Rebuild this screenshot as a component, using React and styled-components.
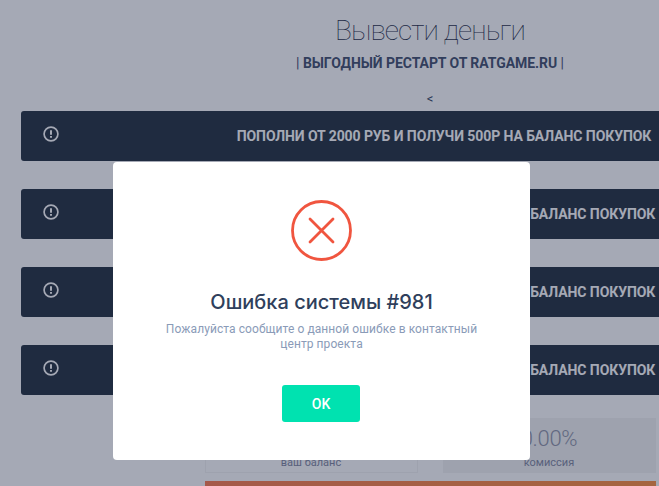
import React from 'react';
import styled, { createGlobalStyle } from 'styled-components';

const GlobalStyle = createGlobalStyle`
  html, body {
    margin: 0;
    height: 486px;
    overflow: hidden;
    background: #fff;
    font-family: Roboto, "Liberation Sans", sans-serif;
  }
`;

const Page = styled.div`
  width: 860px;
  height: 486px;
  display: flex;
  flex-direction: column;
  align-items: center;
  overflow: hidden;
`;

const Title = styled.h1`
  margin: 11px 0 0;
  font-size: 28px;
  line-height: 40px;
  font-weight: 100;
  letter-spacing: -0.9px;
  color: #1c2a45;
`;

const Subtitle = styled.div`
  margin-top: 3px;
  font-size: 14px;
  line-height: 18px;
  letter-spacing: -0.06px;
  color: #3f4d6c;
  b { font-weight: 700; }
`;

const BackMark = styled.div`
  margin-top: 20px;
  font-size: 13px;
  line-height: 14px;
  color: #2f3f5c;
`;

const BannerList = styled.div`
  margin-top: 5px;
  width: 818px;
  display: flex;
  flex-direction: column;
  gap: 28px;
`;

const Banner = styled.div`
  height: 50px;
  box-sizing: border-box;
  padding: 0 10px 0 22px;
  display: flex;
  align-items: flex-start;
  background: #202d3c;
  border-radius: 3px;
  color: #fff;
`;

const BannerIcon = styled.svg`
  width: 16px;
  height: 16px;
  margin-top: 15px;
  flex: none;
`;

const BannerText = styled.div`
  flex: 1;
  padding-top: 16px;
  text-align: center;
  font-size: 14px;
  line-height: 18px;
  font-weight: 700;
  letter-spacing: -0.08px;
`;

const Stats = styled.div`
  margin-top: 23px;
  width: 451px;
  display: grid;
  grid-template-columns: 1fr 1fr;
  gap: 25px;
`;

const StatCard = styled.div`
  height: 55px;
  box-sizing: border-box;
  padding-top: 6px;
  text-align: center;
  border: 1px solid ${p => (p.$filled ? 'transparent' : '#f3f3f3')};
  background: ${p => (p.$filled ? '#f3f3f3' : 'transparent')};
`;

const StatValue = styled.div`
  font-size: 22px;
  line-height: 28px;
  font-weight: 300;
  letter-spacing: -0.3px;
  color: #8f93a8;
`;

const StatLabel = styled.div`
  margin-top: 3px;
  font-size: 11px;
  line-height: 14px;
  color: #7f869f;
`;

const WithdrawBar = styled.div`
  margin-top: 8px;
  width: 451px;
  height: 40px;
  flex: none;
  background: linear-gradient(90deg, #ff7b4d, #ff8e3c);
`;

const Overlay = styled.div`
  position: fixed;
  top: 0;
  left: 0;
  right: 16px;
  bottom: 0;
  display: flex;
  justify-content: center;
  align-items: flex-start;
`;

const Dim = styled.div`
  position: fixed;
  inset: 0;
  background: rgba(30, 40, 70, 0.4);
`;

const Modal = styled.div`
  position: relative;
  margin-top: 162px;
  width: 417px;
  height: 298px;
  box-sizing: border-box;
  padding-top: 38px;
  display: flex;
  flex-direction: column;
  align-items: center;
  background: #fff;
  border-radius: 4px;
`;

const ErrorIcon = styled.svg`
  width: 61px;
  height: 61px;
  display: block;
`;

const ModalTitle = styled.h2`
  margin: 28px 0 0;
  font-family: Inter, Roboto, sans-serif;
  font-size: 20px;
  line-height: 26px;
  font-weight: 500;
  color: #2f3f5c;
`;

const ModalText = styled.p`
  margin: 7px 0 0;
  width: 330px;
  text-align: center;
  font-size: 12px;
  line-height: 15px;
  letter-spacing: 0.08px;
  color: #8a9bb8;
`;

const OkButton = styled.button`
  margin: 33px 1px 0 0;
  width: 78px;
  height: 37px;
  border: 0;
  border-radius: 3px;
  background: #00e2b0;
  color: #fff;
  font-family: Roboto, sans-serif;
  font-size: 14px;
  font-weight: 500;
`;

const InfoIcon = () => (
  <BannerIcon viewBox="0 0 16 16" fill="none" stroke="currentColor">
    <circle cx="8" cy="8" r="6.9" strokeWidth="1.7" />
    <path d="M8 4.2v4.6" strokeWidth="2" />
    <path d="M8 10.1v1.7" strokeWidth="2" />
  </BannerIcon>
);

const banners = [
  'ПОПОЛНИ ОТ 2000 РУБ И ПОЛУЧИ 500Р НА БАЛАНС ПОКУПОК',
  'ПОПОЛНИ ОТ 5000 РУБ И ПОЛУЧИ 1000Р НА БАЛАНС ПОКУПОК',
  'ПОПОЛНИ ОТ 7000 РУБ И ПОЛУЧИ 1500Р НА БАЛАНС ПОКУПОК',
  'ПОПОЛНИ ОТ 9000 РУБ И ПОЛУЧИ 2000Р НА БАЛАНС ПОКУПОК',
];

export default function App() {
  return (
    <>
      <GlobalStyle />
      <Page>
        <Title>Вывести деньги</Title>
        <Subtitle>| <b>ВЫГОДНЫЙ РЕСТАРТ ОТ RATGAME.RU</b> |</Subtitle>
        <BackMark>&lt;</BackMark>
        <BannerList>
          {banners.map(text => (
            <Banner key={text}>
              <InfoIcon />
              <BannerText>{text}</BannerText>
            </Banner>
          ))}
        </BannerList>
        <Stats>
          <StatCard>
            <StatValue>0.00</StatValue>
            <StatLabel>ваш баланс</StatLabel>
          </StatCard>
          <StatCard $filled>
            <StatValue>0.00%</StatValue>
            <StatLabel>комиссия</StatLabel>
          </StatCard>
        </Stats>
        <WithdrawBar />
      </Page>
      <Dim />
      <Overlay>
        <Modal>
          <ErrorIcon viewBox="0 0 61 61" fill="none" stroke="#f0553f" strokeWidth="2.8" strokeLinecap="round">
            <circle cx="30.5" cy="30.5" r="29" />
            <path d="M19 19l23 23M42 19l-23 23" />
          </ErrorIcon>
          <ModalTitle>Ошибка системы #981</ModalTitle>
          <ModalText>Пожалуйста сообщите о данной ошибке в контактный центр проекта</ModalText>
          <OkButton>OK</OkButton>
        </Modal>
      </Overlay>
    </>
  );
}
